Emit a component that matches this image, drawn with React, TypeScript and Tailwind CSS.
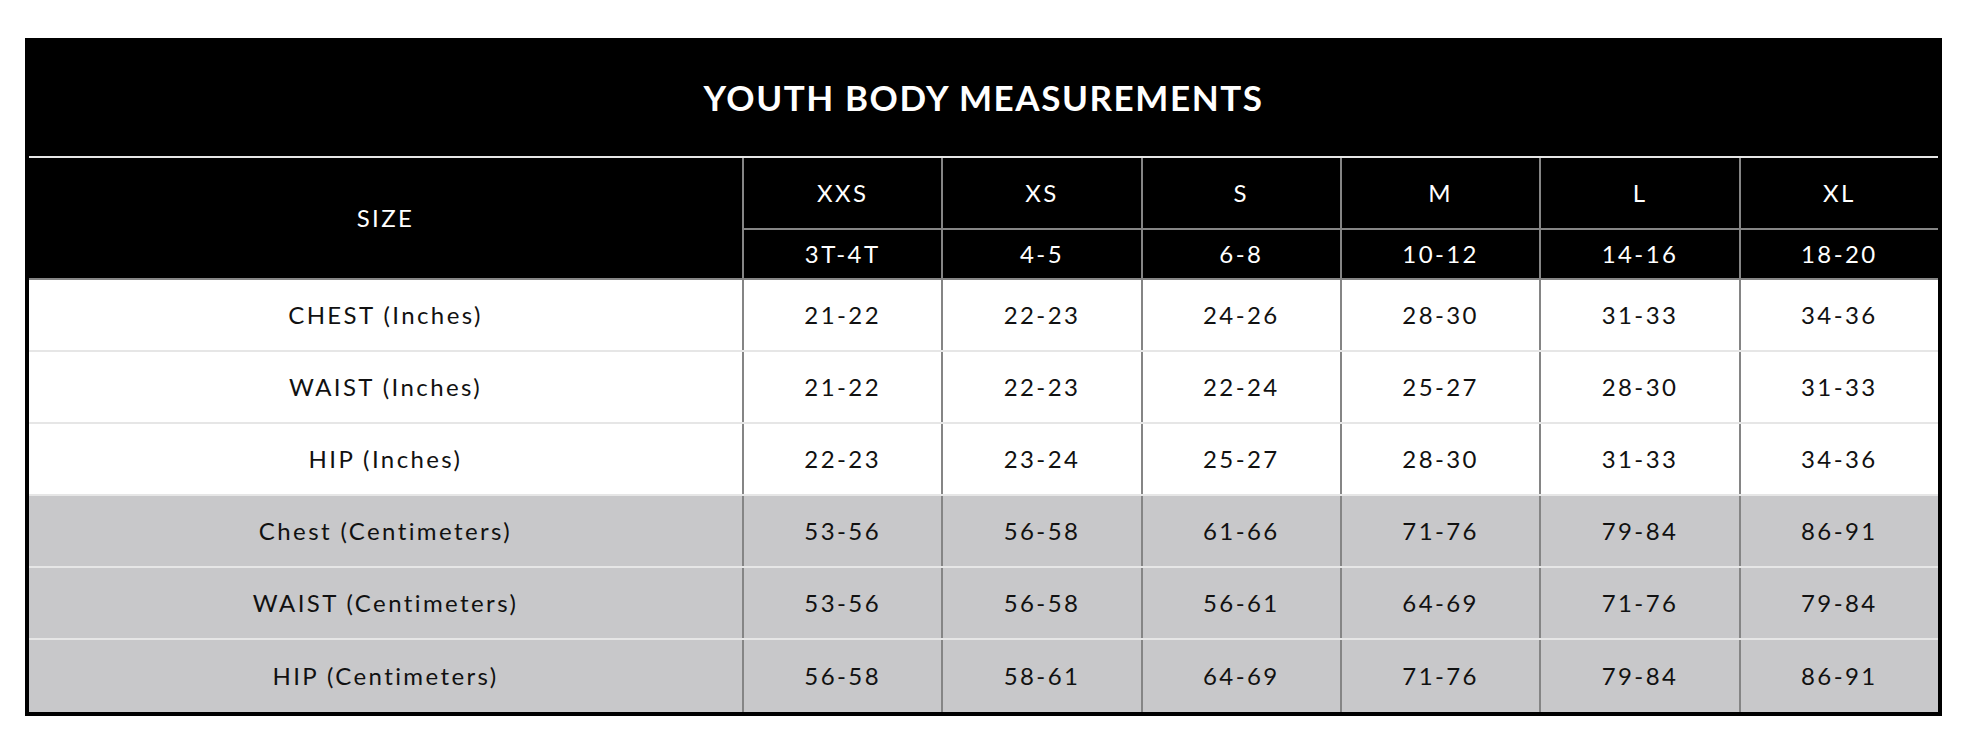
const sizes = [
  { label: 'XXS', age: '3T-4T' },
  { label: 'XS', age: '4-5' },
  { label: 'S', age: '6-8' },
  { label: 'M', age: '10-12' },
  { label: 'L', age: '14-16' },
  { label: 'XL', age: '18-20' },
];

const rows = [
  { name: 'CHEST (Inches)', values: ['21-22', '22-23', '24-26', '28-30', '31-33', '34-36'], shaded: false },
  { name: 'WAIST (Inches)', values: ['21-22', '22-23', '22-24', '25-27', '28-30', '31-33'], shaded: false },
  { name: 'HIP (Inches)', values: ['22-23', '23-24', '25-27', '28-30', '31-33', '34-36'], shaded: false },
  { name: 'Chest (Centimeters)', values: ['53-56', '56-58', '61-66', '71-76', '79-84', '86-91'], shaded: true },
  { name: 'WAIST (Centimeters)', values: ['53-56', '56-58', '56-61', '64-69', '71-76', '79-84'], shaded: true },
  { name: 'HIP (Centimeters)', values: ['56-58', '58-61', '64-69', '71-76', '79-84', '86-91'], shaded: true },
];

export default function App() {
  return (
    <div className="min-h-screen bg-white pl-[25px] pt-[38px] font-['Lato',sans-serif]">
      <div className="w-[1917px] border-4 border-black bg-black">
        {/* Title */}
        <div className="flex h-[116px] items-center justify-center border-b-2 border-[#e6e6e6] pb-[4px]">
          <h1 className="text-[35px] font-bold tracking-[0.045em] text-white">YOUTH BODY MEASUREMENTS</h1>
        </div>

        {/* Size header */}
        <div className="grid grid-cols-[713px_repeat(6,1fr)] border-b-2 border-[#858585] text-[24px] tracking-[0.1em] text-white">
          <div className="row-span-2 flex items-center justify-center">SIZE</div>
          {sizes.map((s) => (
            <div key={s.label} className="flex h-[72px] items-center justify-center border-b-2 border-l-2 border-[#858585]">
              {s.label}
            </div>
          ))}
          {sizes.map((s) => (
            <div key={s.age} className="flex h-[48px] items-center justify-center border-l-2 border-[#858585]">
              {s.age}
            </div>
          ))}
        </div>

        {/* Measurements */}
        {rows.map((row, i) => (
          <div
            key={row.name}
            className={`grid h-[72px] grid-cols-[713px_repeat(6,1fr)] text-[24px] tracking-[0.1em] text-[#111] ${
              row.shaded ? 'bg-[#c8c8ca]' : 'bg-white'
            } ${i < rows.length - 1 ? 'border-b-2 border-[#e6e6e6]' : 'h-[70px]'}`}
          >
            <div className="flex items-center justify-center">{row.name}</div>
            {row.values.map((v, j) => (
              <div key={j} className="flex items-center justify-center border-l-2 border-[#858585]">
                {v}
              </div>
            ))}
          </div>
        ))}
      </div>
    </div>
  );
}
